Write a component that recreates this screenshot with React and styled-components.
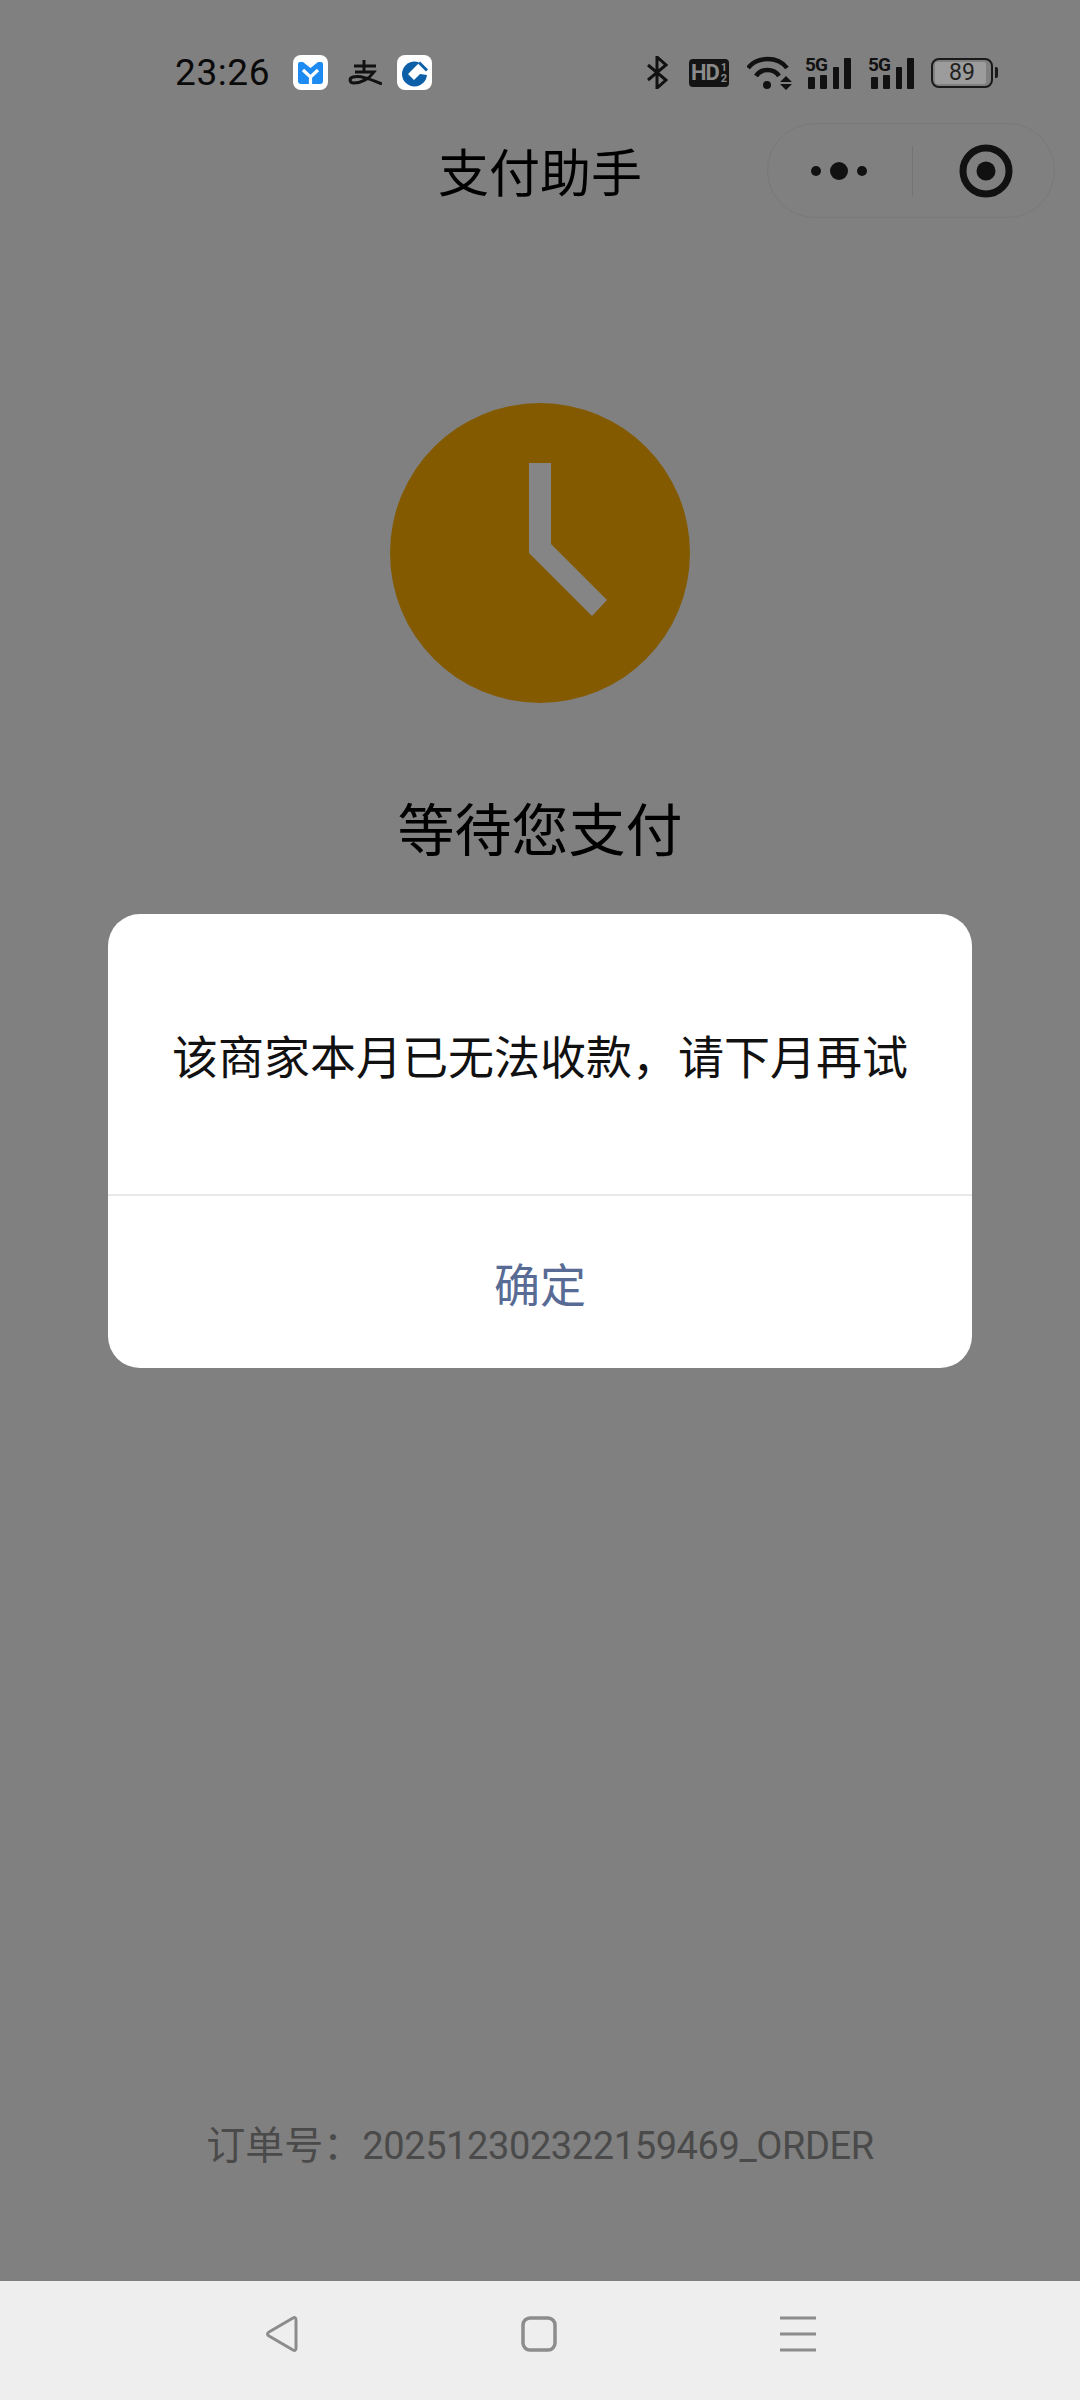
import React from "react"
import styled, { createGlobalStyle } from "styled-components"

const GlobalStyle = createGlobalStyle`
    html, body {
        margin: 0;
        padding: 0;
        background: #808080;
    }
    * {
        box-sizing: border-box;
    }
`

const Screen = styled.div`
    position: relative;
    width: 1080px;
    height: 2400px;
    display: flex;
    flex-direction: column;
    overflow: hidden;
    background: #808080;
    color: #000;
    font-family: "Noto Sans CJK SC", "Roboto", sans-serif;
`

const Main = styled.div`
    flex: 1;
    display: flex;
    flex-direction: column;
    align-items: center;
`

const StatusBar = styled.div`
    width: 100%;
    height: 55px;
    margin-top: 45px;
    padding: 0 87px 0 175px;
    display: flex;
    align-items: center;
    justify-content: space-between;
`

const StatusGroup = styled.div`
    display: flex;
    align-items: center;
`

const StatusSlot = styled.div`
    display: flex;
    align-items: center;
    margin-left: ${(props) => props.$left || 0}px;
`

const Time = styled.span`
    font-family: "Roboto", sans-serif;
    font-size: 37px;
    letter-spacing: 0.6px;
    width: 118px;
    color: #0a0a0a;
`

const AppTile = styled.div`
    width: 35px;
    height: 35px;
    border-radius: 8px;
    background: #fff;
    display: flex;
    align-items: center;
    justify-content: center;
`

const HdBadge = styled.div`
    width: 40px;
    height: 28px;
    border-radius: 4px;
    background: #141414;
    color: #8a8a8a;
    display: flex;
    align-items: center;
    justify-content: center;
    font-family: "Roboto", sans-serif;
    font-weight: 700;
    font-size: 22px;
    letter-spacing: -1px;
    line-height: 1;
`

const HdStack = styled.span`
    display: flex;
    flex-direction: column;
    align-items: center;
    margin-left: 2px;
    font-size: 11px;
    letter-spacing: 0;
    line-height: 11px;
`

const SignalWrap = styled.div`
    position: relative;
    width: 46px;
    height: 32px;
`

const SignalLabel = styled.span`
    position: absolute;
    left: 0;
    top: -1px;
    font-family: "Roboto", sans-serif;
    font-weight: 700;
    font-size: 19px;
    line-height: 18px;
    letter-spacing: -0.8px;
    color: #111;
`

const Battery = styled.div`
    position: relative;
    width: 62px;
    height: 30px;
    border: 2.5px solid #1a1a1a;
    border-radius: 8px;
    display: flex;
    align-items: center;
    justify-content: center;
    font-family: "Roboto", sans-serif;
    font-size: 23px;
    line-height: 1;
    color: #222;

    &::after {
        content: "";
        position: absolute;
        right: -7px;
        top: 7px;
        width: 3px;
        height: 11px;
        border-radius: 0 2px 2px 0;
        background: #1a1a1a;
    }
`

const BatteryFill = styled.div`
    position: absolute;
    left: 2px;
    top: 2px;
    bottom: 2px;
    border-radius: 2px;
    background: #9c9c9c;
`

const BatteryLevel = styled.span`
    position: relative;
`

const TitleBar = styled.div`
    position: relative;
    width: 100%;
    height: 95px;
    margin-top: 23px;
    display: flex;
    align-items: center;
    justify-content: center;
`

const Title = styled.div`
    font-size: 51px;
    line-height: 1;
    color: #000;
`

const Capsule = styled.div`
    position: absolute;
    left: 767px;
    top: 0;
    width: 288px;
    height: 95px;
    border: 1px solid #797979;
    border-radius: 48px;
    display: flex;
    align-items: center;
`

const CapsuleHalf = styled.div`
    flex: ${(props) => (props.$grow ? 1 : "0 0 144px")};
    height: 100%;
    padding-left: ${(props) => (props.$grow ? 4 : 0)}px;
    display: flex;
    align-items: center;
    justify-content: center;
`

const CapsuleDivider = styled.div`
    width: 1px;
    height: 50px;
    background: #747474;
`

const ClockIcon = styled.svg`
    display: block;
    margin-top: 185px;
`

const StatusText = styled.div`
    margin-top: 80px;
    font-size: 57px;
    line-height: 86px;
    color: #000;
`

const OrderNumber = styled.div`
    margin-top: auto;
    margin-bottom: 110px;
    font-size: 39px;
    line-height: 50px;
    color: #4a4a4a;
`

const OrderCode = styled.span`
    font-family: "Roboto", sans-serif;
    font-size: 38px;
    letter-spacing: -0.4px;
`

const NavBar = styled.div`
    height: 119px;
    flex-shrink: 0;
    background: #eeeeee;
    padding: 35px 264px 0 265px;
    display: flex;
    align-items: flex-start;
    justify-content: space-between;
`

const Dialog = styled.div`
    position: absolute;
    left: 108px;
    top: 914px;
    width: 864px;
    height: 454px;
    border-radius: 32px;
    background: #fff;
    display: flex;
    flex-direction: column;
`

const DialogBody = styled.div`
    height: 282px;
    display: flex;
    align-items: center;
    justify-content: center;
    border-bottom: 2px solid #e8e8e8;
    font-size: 46px;
    color: #111;
`

const DialogButton = styled.div`
    flex: 1;
    display: flex;
    align-items: center;
    justify-content: center;
    font-size: 46px;
    color: #576b95;
`

const App = () => {
    return (
        <Screen>
            <GlobalStyle />
            <Main>
                <StatusBar>
                    <StatusGroup>
                        <Time>23:26</Time>
                        <AppTile>
                            <svg width="25" height="22" viewBox="0 0 25 22">
                                <path d="M2 0 H5 L12.5 6 L20 0 H23 Q25 0 25 2 V19 Q25 22 22 22 H3 Q0 22 0 19 V2 Q0 0 2 0 Z" fill="#1d8bf1" />
                                <path d="M5 8 L12.5 15 L20 8 M12.5 15 V22" fill="none" stroke="#ffffff" strokeWidth="3.2" />
                            </svg>
                        </AppTile>
                        <StatusSlot $left={20}>
                            <svg width="34" height="25" viewBox="0 0 34 25">
                                <path d="M6 6 H28 M16 0 V12 M7 12 H26 C21 19 13 23 6 23 C1 23 1 18 5 17 C13 15 24 20 34 24" fill="none" stroke="#111" strokeWidth="3" />
                            </svg>
                        </StatusSlot>
                        <StatusSlot $left={15}>
                            <AppTile>
                                <svg width="28" height="28" viewBox="0 0 28 28">
                                    <circle cx="13.5" cy="15" r="12.5" fill="#0d5fa8" />
                                    <path d="M13 9 L17 5 L19 1 L29 11 L26 16 L19 15 L13 21 L7 15 Z" fill="#ffffff" />
                                    <path d="M18 3.5 L26 11.5" stroke="#0d5fa8" strokeWidth="3" />
                                </svg>
                            </AppTile>
                        </StatusSlot>
                    </StatusGroup>
                    <StatusGroup>
                        <svg width="21" height="33" viewBox="0 0 21 33">
                            <path d="M1 9 L19 24 L10 32 V1 L19 9 L1 24" fill="none" stroke="#111" strokeWidth="3" />
                        </svg>
                        <StatusSlot $left={21}>
                            <HdBadge>
                                HD
                                <HdStack>
                                    <span>1</span>
                                    <span>2</span>
                                </HdStack>
                            </HdBadge>
                        </StatusSlot>
                        <StatusSlot $left={18}>
                            <svg width="45" height="34" viewBox="0 0 45 34">
                                <path d="M1 12 C10 0 31 0 40 12" fill="none" stroke="#111" strokeWidth="4.5" />
                                <path d="M9 20 C14 12 27 12 32 20" fill="none" stroke="#111" strokeWidth="4.5" />
                                <circle cx="20" cy="29" r="4" fill="#111" />
                                <path d="M33 26 L39 20 L45 26 Z M33 28 H45 L39 34 Z" fill="#111" />
                            </svg>
                        </StatusSlot>
                        {[13, 17].map((left) => (
                            <StatusSlot $left={left} key={left}>
                                <SignalWrap>
                                    <SignalLabel>5G</SignalLabel>
                                    <svg width="46" height="32" viewBox="0 0 46 32">
                                        <rect x="3" y="20" width="7" height="12" rx="1" fill="#111" />
                                        <rect x="15" y="18" width="7" height="14" rx="1" fill="#111" />
                                        <rect x="28" y="10" width="6" height="22" rx="1" fill="#111" />
                                        <rect x="39" y="1" width="7" height="31" rx="1" fill="#111" />
                                    </svg>
                                </SignalWrap>
                            </StatusSlot>
                        ))}
                        <StatusSlot $left={17}>
                            <Battery>
                                <BatteryFill style={{ width: `${89 * 0.57}px` }} />
                                <BatteryLevel>89</BatteryLevel>
                            </Battery>
                        </StatusSlot>
                    </StatusGroup>
                </StatusBar>
                <TitleBar>
                    <Title>支付助手</Title>
                    <Capsule>
                        <CapsuleHalf>
                            <svg width="60" height="20" viewBox="0 0 60 20">
                                <circle cx="6" cy="10" r="5" fill="#111" />
                                <circle cx="29" cy="10" r="9" fill="#111" />
                                <circle cx="52" cy="10" r="5" fill="#111" />
                            </svg>
                        </CapsuleHalf>
                        <CapsuleDivider />
                        <CapsuleHalf $grow>
                            <svg width="54" height="54" viewBox="0 0 54 54">
                                <circle cx="27" cy="27" r="23" fill="none" stroke="#111" strokeWidth="7" />
                                <circle cx="27" cy="27" r="9.5" fill="#111" />
                            </svg>
                        </CapsuleHalf>
                    </Capsule>
                </TitleBar>
                <ClockIcon width="300" height="300" viewBox="0 0 300 300">
                    <circle cx="150" cy="150" r="150" fill="#835a00" />
                    <path d="M139 60 H161 V141 L217 197 L202 213 L139 150 Z" fill="#858585" />
                </ClockIcon>
                <StatusText>等待您支付</StatusText>
                <OrderNumber>
                    {"订单号\uFF1A"}<OrderCode>202512302322159469_ORDER</OrderCode>
                </OrderNumber>
            </Main>
            <NavBar>
                <svg width="33" height="36" viewBox="0 0 33 36">
                    <path d="M28 2 C30 1 31 2 31 4 V32 C31 34 30 35 28 34 L4 20 C2 19 2 17 4 16 Z" fill="none" stroke="#8c8c8c" strokeWidth="3" strokeLinejoin="round" />
                </svg>
                <svg width="36" height="36" viewBox="0 0 36 36">
                    <rect x="2" y="2" width="32" height="32" rx="7" fill="none" stroke="#8c8c8c" strokeWidth="3.5" />
                </svg>
                <svg width="36" height="36" viewBox="0 0 36 36">
                    <path d="M0 2 H36 M0 18 H36 M0 34 H36" fill="none" stroke="#8c8c8c" strokeWidth="3" />
                </svg>
            </NavBar>
            <Dialog>
                <DialogBody>{"该商家本月已无法收款\uFF0C请下月再试"}</DialogBody>
                <DialogButton>确定</DialogButton>
            </Dialog>
        </Screen>
    )
}

export default App
